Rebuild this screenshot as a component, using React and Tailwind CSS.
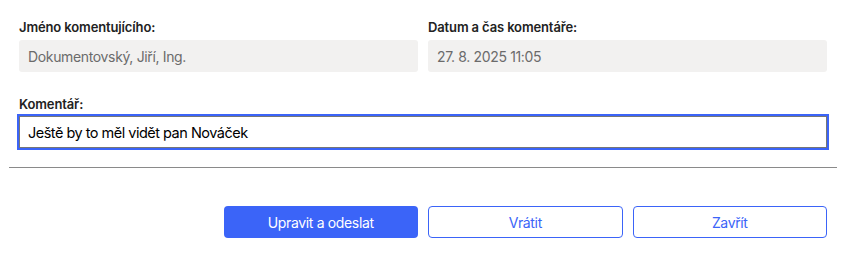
import { useState } from 'react';

const font = { fontFamily: "Inter, 'Noto Sans', sans-serif" };

const App = () => {
  const [comment, setComment] = useState('Ještě by to měl vidět pan Nováček');

  return (
    <div className="w-[842px] h-[258px] bg-white pl-[9px] pr-[5px]" style={font}>
      {/* Form fields */}
      <div className="px-[10px] pt-[19px]">
        <div className="grid grid-cols-2 gap-[10px]">
          <div>
            <label className="block text-[13px] leading-4 font-semibold text-[#222] tracking-[-0.01em]">
              Jméno komentujícího:
            </label>
            <div className="mt-[5px] h-8 rounded-[3px] bg-[#f2f1f0] px-[9px] flex items-center text-[14px] text-[#6b6b6b] tracking-[-0.025em]">
              Dokumentovský, Jiří, Ing.
            </div>
          </div>
          <div>
            <label className="block text-[13px] leading-4 font-semibold text-[#222] tracking-[-0.01em]">
              Datum a čas komentáře:
            </label>
            <div className="mt-[5px] h-8 rounded-[3px] bg-[#f2f1f0] px-[9px] flex items-center text-[14px] text-[#6b6b6b] tracking-[-0.025em]">
              27. 8. 2025 11:05
            </div>
          </div>
        </div>

        <label className="block mt-[24px] text-[13px] leading-4 font-semibold text-[#222] tracking-[-0.01em]">
          Komentář:
        </label>
        <input
          value={comment}
          onChange={(e) => setComment(e.target.value)}
          className="mt-[4px] block w-full h-8 border border-[#767676] outline-2 outline-solid outline-[#3b64f8] px-[8px] text-[14.5px] text-black tracking-[-0.035em]"
          style={font}
        />
      </div>

      {/* Divider */}
      <div className="mt-[19px] h-px bg-[#8a8a8a]" />

      {/* Actions */}
      <div className="px-[10px] pt-[38px]">
        <div className="grid grid-cols-4 gap-[10px]">
          <div />
          <button className="h-8 rounded-[4px] bg-[#3b64f8] text-white text-[14px] tracking-[-0.025em]" style={font}>
            Upravit a odeslat
          </button>
          <button className="h-8 rounded-[4px] border border-[#3b64f8] bg-white text-[#3b64f8] text-[14px] tracking-[-0.025em]" style={font}>
            Vrátit
          </button>
          <button className="h-8 rounded-[4px] border border-[#3b64f8] bg-white text-[#3b64f8] text-[14px] tracking-[-0.025em]" style={font}>
            Zavřít
          </button>
        </div>
      </div>
    </div>
  );
};

export default App;
